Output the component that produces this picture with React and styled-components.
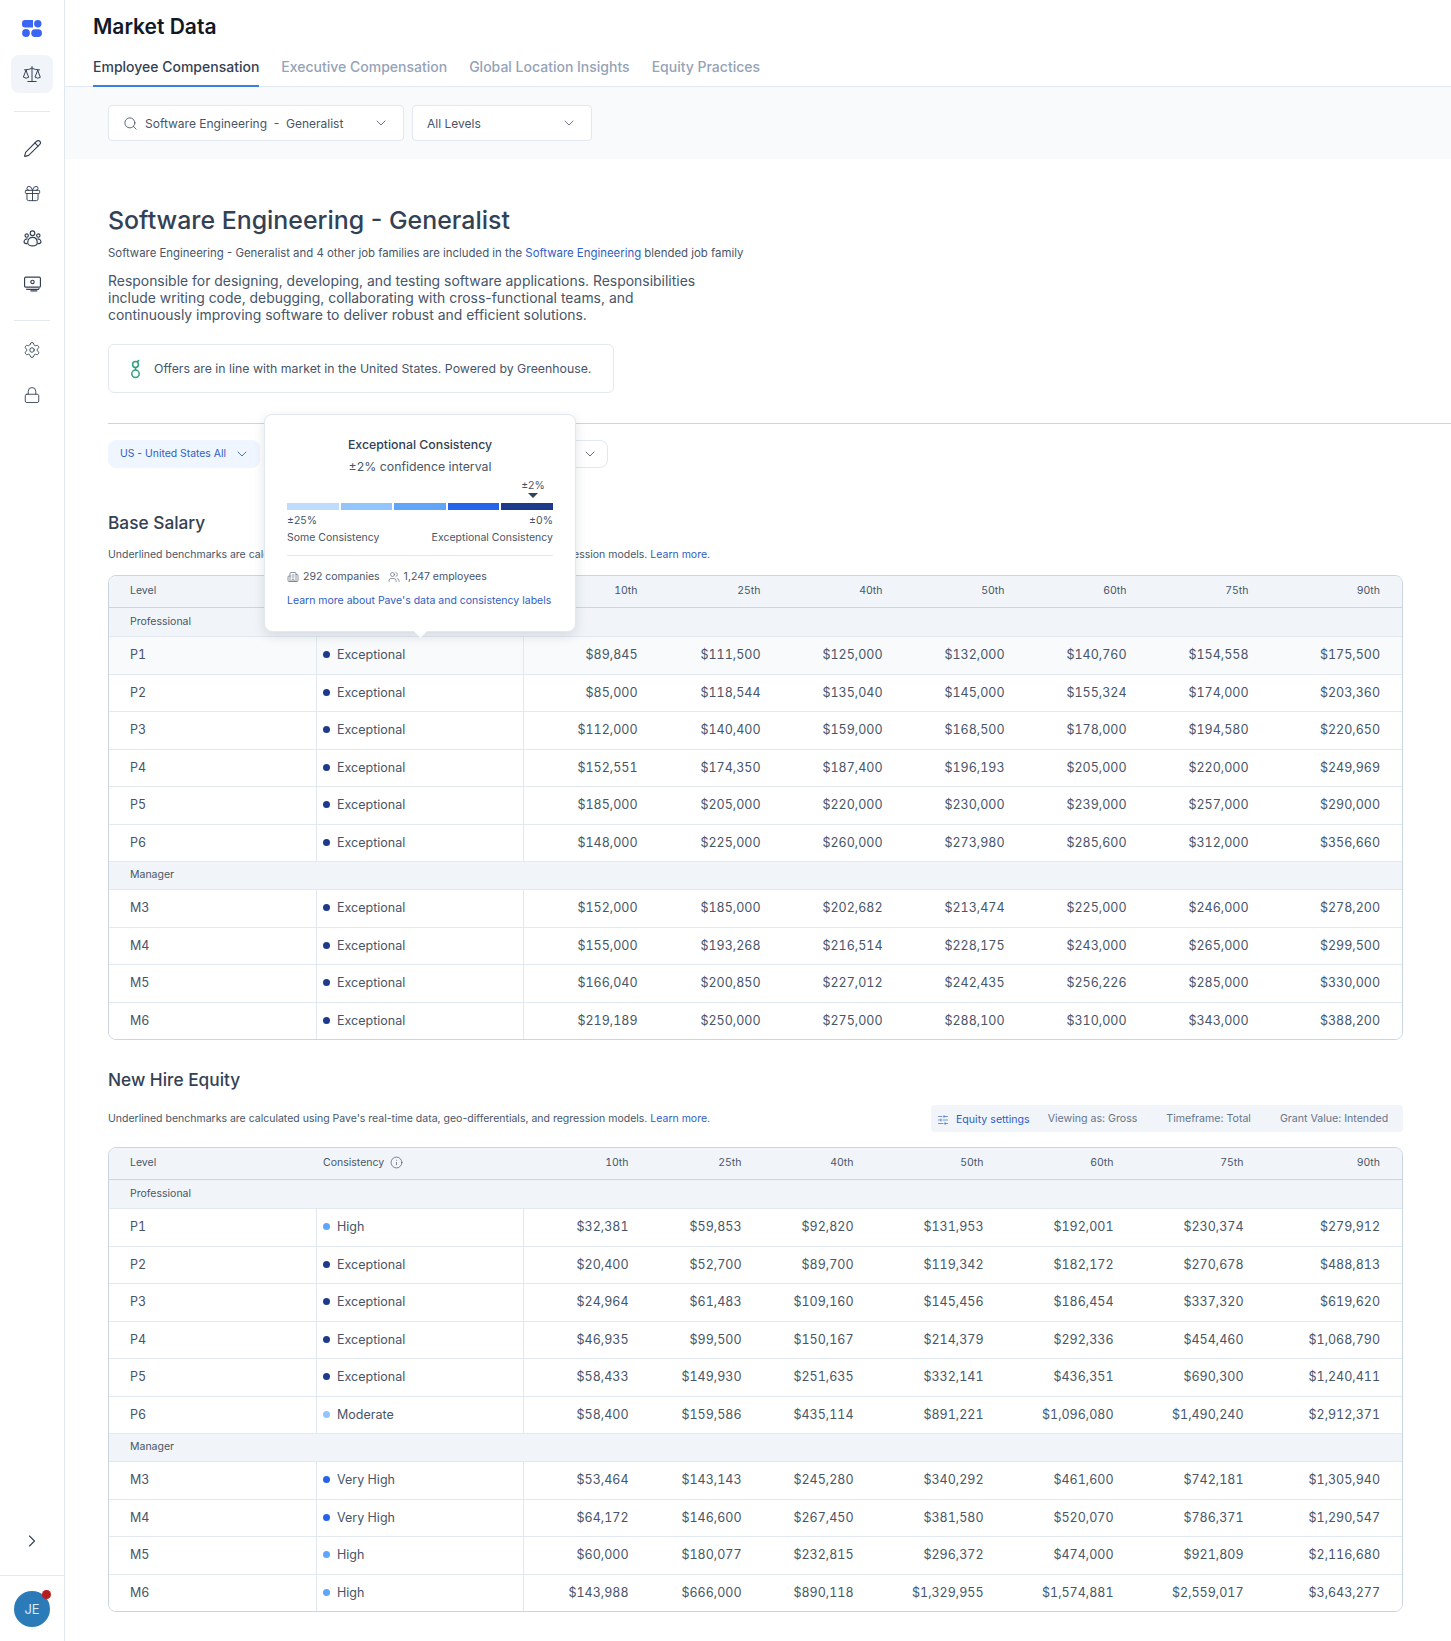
import React from "react";
import styled, { createGlobalStyle } from "styled-components";
import {
  Scale,
  Pencil,
  Gift,
  Settings,
  Lock,
  ChevronRight,
  ChevronDown,
  Search,
  Info,
  SlidersHorizontal,
  Building2,
  Users,
} from "lucide-react";

const GlobalStyle = createGlobalStyle`
  body {
    margin: 0;
    padding: 0;
    background: #fff;
    font-family: Inter, "Noto Sans", sans-serif;
    color: #334155;
  }
  * {
    box-sizing: border-box;
  }
`;

const Shell = styled.div`
  display: flex;
  min-height: 1641px;
`;

const Sidebar = styled.aside`
  width: 65px;
  flex-shrink: 0;
  display: flex;
  flex-direction: column;
  align-items: center;
  border-right: 1px solid #e2e8f0;
  color: #334155;
`;

const LogoSlot = styled.div`
  height: 55px;
  display: flex;
  align-items: center;
  justify-content: center;
  padding-top: 1px;
`;

const NavItem = styled.div`
  width: 42px;
  height: 38px;
  margin: ${(p) => p.$margin || "0"};
  display: flex;
  align-items: center;
  justify-content: center;
  border-radius: 8px;
  background: ${(p) => (p.$active ? "#f1f5f9" : "transparent")};
`;

const SideRule = styled.div`
  width: 36px;
  height: 1px;
  background: #e2e8f0;
  margin: ${(p) => p.$margin};
`;

const SideFoot = styled.div`
  margin-top: auto;
  width: 100%;
  display: flex;
  flex-direction: column;
  align-items: center;
`;

const FootRule = styled.div`
  width: 100%;
  height: 1px;
  background: #e2e8f0;
  margin-top: 24px;
`;

const Avatar = styled.div`
  position: relative;
  width: 36px;
  height: 36px;
  margin: 15px 0 14px;
  border-radius: 50%;
  background: #2b7bb9;
  color: #dbeafe;
  font-size: 13px;
  display: flex;
  align-items: center;
  justify-content: center;
`;

const Badge = styled.span`
  position: absolute;
  top: -1px;
  right: -1px;
  width: 9px;
  height: 9px;
  border-radius: 50%;
  background: #b91c1c;
`;

const Main = styled.main`
  flex: 1;
  min-width: 0;
`;

const TopBar = styled.header`
  padding: 14px 0 0 28px;
  border-bottom: 1px solid #e2e8f0;
`;

const PageTitle = styled.h1`
  margin: 0;
  font-size: 21px;
  line-height: 26px;
  font-weight: 600;
  color: #111827;
`;

const Tabs = styled.nav`
  display: flex;
  gap: 22px;
  margin-top: 17px;
`;

const Tab = styled.div`
  font-size: 14px;
  line-height: 20px;
  font-weight: 500;
  padding-bottom: 8px;
  color: ${(p) => (p.$active ? "#334155" : "#94a3b8")};
  border-bottom: 2px solid ${(p) => (p.$active ? "#3b7de0" : "transparent")};
  margin-bottom: -1px;
`;

const FilterBar = styled.div`
  display: flex;
  gap: 8px;
  padding: 18px 0 18px 43px;
  background: #f8fafc;
`;

const Select = styled.div`
  width: ${(p) => p.$width}px;
  height: 36px;
  padding: 0 14px;
  display: flex;
  align-items: center;
  gap: 7px;
  background: #fff;
  border: 1px solid #e2e8f0;
  border-radius: 4px;
  font-size: 12px;
  color: #475569;

  span {
    flex: 1;
    white-space: pre;
  }
`;

const Content = styled.div`
  padding: 43px 48px 0 43px;
`;

const JobTitle = styled.h2`
  margin: 0;
  font-size: 24.9px;
  line-height: 36px;
  font-weight: 500;
  color: #334155;
`;

const Blended = styled.p`
  margin: 6px 0 0;
  font-size: 11.4px;
  line-height: 18px;
  color: #475569;
`;

const TextLink = styled.a`
  color: #2f5dc4;
`;

const Description = styled.p`
  margin: 10px 0 0;
  width: 600px;
  font-size: 13.95px;
  line-height: 17px;
  color: #475569;
`;

const Callout = styled.div`
  width: 506px;
  height: 49px;
  margin-top: 21px;
  padding: 0 21px;
  display: flex;
  align-items: center;
  gap: 12px;
  border: 1px solid #e2e8f0;
  border-radius: 6px;
  font-size: 12.3px;
  color: #475569;
  white-space: nowrap;
`;

const Benchmarks = styled.div`
  position: relative;
  margin: 30px -48px 0 0;
  border-top: 1px solid #cbd5e1;
  padding: 16px 48px 0 0;
`;

const ChipRow = styled.div`
  display: flex;
  gap: 8px;
`;

const Chip = styled.div`
  height: 28px;
  width: ${(p) => p.$width}px;
  padding: 0 9px 1px 11px;
  display: flex;
  align-items: center;
  justify-content: space-between;
  border-radius: 8px;
  font-size: 10.4px;
  color: #2f5dc4;
  white-space: nowrap;
  background: ${(p) => (p.$plain ? "#fff" : "#eff6ff")};
  border: 1px solid ${(p) => (p.$plain ? "#e2e8f0" : "#eff6ff")};
`;

const SectionTitle = styled.h3`
  margin: ${(p) => p.$margin};
  font-size: 17.3px;
  line-height: 24px;
  font-weight: 500;
  color: #334155;
`;

const Note = styled.p`
  margin: 0;
  font-size: 10.5px;
  line-height: 16px;
  color: #475569;
`;

const NoteRow = styled.div`
  display: flex;
  align-items: center;
  justify-content: space-between;
  margin-top: ${(p) => p.$top}px;
`;

const EquityBar = styled.div`
  width: 472px;
  height: 27px;
  padding: 0 14px 0 6px;
  display: flex;
  align-items: center;
  background: #f1f5f9;
  border-radius: 4px;
  font-size: 10.6px;
  color: #64748b;
  white-space: nowrap;
`;

const EquityLink = styled.span`
  display: flex;
  align-items: center;
  gap: 7px;
  color: #2f5dc4;
  padding-top: 2px;
  margin-right: 18px;
`;

const EquityItem = styled.span`
  margin-right: ${(p) => p.$gap || 0}px;
`;

const Table = styled.div`
  margin-top: ${(p) => p.$top}px;
  border: 1px solid #cbd5e1;
  border-radius: 8px;
  overflow: hidden;
`;

const Row = styled.div`
  display: grid;
  grid-template-columns: ${(p) => p.$cols};
  height: 37.5px;
  align-items: stretch;
  font-size: 12.5px;
  font-variant-numeric: tabular-nums;
  color: #475569;
  background: ${(p) => (p.$hover ? "#f8fafc" : "#fff")};
  border-top: 1px solid #e2e8f0;
`;

const HeadRow = styled(Row)`
  height: 32px;
  padding-bottom: 1px;
  font-size: 10.5px;
  background: #f1f5f9;
  border-top: 0;
  border-bottom: 1px solid #cbd5e1;
`;

const GroupRow = styled.div`
  height: 28px;
  padding: 0 0 2px 21px;
  display: flex;
  align-items: center;
  background: #f1f5f9;
  font-size: 10.5px;
  color: #475569;
  border-top: ${(p) => (p.$first ? "0" : "1px solid #e2e8f0")};
`;

const Cell = styled.div`
  display: flex;
  align-items: center;
  gap: ${(p) => p.$gap || 6}px;
  justify-content: ${(p) => (p.$right ? "flex-end" : "flex-start")};
  padding: 0 ${(p) => (p.$last ? 22 : 0)}px 1px ${(p) => p.$left || 0}px;
  border-left: ${(p) => (p.$split ? "1px solid #e2e8f0" : "0")};
  white-space: nowrap;
`;

const Dot = styled.i`
  width: 7px;
  height: 7px;
  border-radius: 50%;
  background: ${(p) => p.$color};
`;

const Popover = styled.div`
  position: absolute;
  z-index: 5;
  top: -10px;
  left: 156px;
  width: 312px;
  height: 218px;
  padding: 20px 22px 0;
  background: #fff;
  border: 1px solid #e2e8f0;
  border-radius: 8px;
  box-shadow: 0 4px 12px rgba(15, 23, 42, 0.12);
  color: #475569;
  font-size: 10.5px;

  &:after {
    content: "";
    position: absolute;
    left: 151px;
    bottom: -5px;
    width: 9px;
    height: 9px;
    background: #fff;
    transform: rotate(45deg);
  }
`;

const PopTitle = styled.div`
  text-align: center;
  font-size: 12.3px;
  line-height: 20px;
  font-weight: 500;
  color: #334155;
`;

const PopSub = styled(PopTitle)`
  margin-top: 2px;
  font-weight: 400;
  color: #475569;
`;

const Marker = styled.div`
  margin-top: 2px;
  width: 40px;
  margin-left: auto;
  text-align: center;
  line-height: 14px;
`;

const MarkerArrow = styled.div`
  margin: 0 auto;
  width: 0;
  height: 0;
  border-left: 5px solid transparent;
  border-right: 5px solid transparent;
  border-top: 5px solid #334155;
`;

const Bar = styled.div`
  display: grid;
  grid-template-columns: repeat(5, 1fr);
  gap: 2px;
  margin-top: 5px;
`;

const BarPiece = styled.div`
  height: 7px;
  background: ${(p) => p.$color};
`;

const Between = styled.div`
  display: flex;
  justify-content: space-between;
  line-height: 17px;
  margin-top: ${(p) => p.$top || 0}px;
`;

const PopRule = styled.div`
  height: 1px;
  background: #e2e8f0;
  margin-top: 9px;
`;

const Stats = styled.div`
  display: flex;
  align-items: center;
  gap: 4px;
  margin-top: 13px;
  line-height: 16px;

  span + svg {
    margin-left: 4px;
  }
`;

const PopLink = styled(TextLink)`
  display: block;
  margin-top: 8px;
  line-height: 16px;
`;

const LogoMark = () => (
  <svg width="20" height="17" viewBox="0 0 20 17" fill="#3b66f5">
    <path d="M0 3a3 3 0 0 1 3-3h8v7.4H3a3 3 0 0 1-3-3z" />
    <circle cx="15.8" cy="3.7" r="3.7" />
    <circle cx="4" cy="13" r="3.9" />
    <rect x="9.2" y="9.2" width="10.8" height="7.8" rx="3.9" />
  </svg>
);

const GroupIcon = () => (
  <svg width="19" height="19" viewBox="0 0 18 18" fill="none" stroke="currentColor" strokeWidth="1.1">
    <circle cx="9" cy="4" r="2.2" />
    <circle cx="3.5" cy="6.2" r="1.6" />
    <circle cx="14.5" cy="6.2" r="1.6" />
    <path d="M4.5 13c0-3.6 2-5 4.5-5s4.5 1.4 4.5 5c0 1.8-2 3-4.5 3s-4.5-1.2-4.5-3z" />
    <path d="M4.4 9.4C2.4 9.3 1 10.4 1 12.2c0 1 1 1.6 3.2 1.7M13.6 9.4c2-.1 3.4 1 3.4 2.8 0 1-1 1.6-3.2 1.7" />
  </svg>
);

const MoneyIcon = () => (
  <svg width="19" height="19" viewBox="0 0 18 18" fill="none" stroke="currentColor" strokeWidth="1.1">
    <rect x="1.5" y="3" width="15" height="9.5" rx="1.2" />
    <circle cx="9" cy="7.5" r="1.6" />
    <path d="M4 7.5h.1M13.9 7.5h.1M3 14.5h11.5l1-1M7 16h6.5" />
  </svg>
);

const GreenhouseIcon = () => (
  <svg width="12" height="20" viewBox="0 0 12 20" fill="none" stroke="#2f9e7a" strokeWidth="1.5">
    <circle cx="5.5" cy="5.5" r="2.9" />
    <circle cx="5.5" cy="14.8" r="3.7" />
    <path d="M5.5 8.4v2.7M7.4 3.2c.2-1 .9-1.8 1.9-2" />
  </svg>
);

const LEVELS = { E: "Exceptional", V: "Very High", H: "High", M: "Moderate" };
const DOTS = { E: "#1e3a8a", V: "#2563eb", H: "#60a5fa", M: "#93c5fd" };

const BASE_COLS = "207px 206.5px 115px 123px 122px 122px 122px 122px 1fr";
const EQUITY_COLS = "207px 206.5px 106px 113px 112px 130px 130px 130px 1fr";
const PERCENTILES = ["10th", "25th", "40th", "50th", "60th", "75th", "90th"];

const baseRows = [
  ["P1", "E", "89,845 111,500 125,000 132,000 140,760 154,558 175,500"],
  ["P2", "E", "85,000 118,544 135,040 145,000 155,324 174,000 203,360"],
  ["P3", "E", "112,000 140,400 159,000 168,500 178,000 194,580 220,650"],
  ["P4", "E", "152,551 174,350 187,400 196,193 205,000 220,000 249,969"],
  ["P5", "E", "185,000 205,000 220,000 230,000 239,000 257,000 290,000"],
  ["P6", "E", "148,000 225,000 260,000 273,980 285,600 312,000 356,660"],
  ["M3", "E", "152,000 185,000 202,682 213,474 225,000 246,000 278,200"],
  ["M4", "E", "155,000 193,268 216,514 228,175 243,000 265,000 299,500"],
  ["M5", "E", "166,040 200,850 227,012 242,435 256,226 285,000 330,000"],
  ["M6", "E", "219,189 250,000 275,000 288,100 310,000 343,000 388,200"],
];

const equityRows = [
  ["P1", "H", "32,381 59,853 92,820 131,953 192,001 230,374 279,912"],
  ["P2", "E", "20,400 52,700 89,700 119,342 182,172 270,678 488,813"],
  ["P3", "E", "24,964 61,483 109,160 145,456 186,454 337,320 619,620"],
  ["P4", "E", "46,935 99,500 150,167 214,379 292,336 454,460 1,068,790"],
  ["P5", "E", "58,433 149,930 251,635 332,141 436,351 690,300 1,240,411"],
  ["P6", "M", "58,400 159,586 435,114 891,221 1,096,080 1,490,240 2,912,371"],
  ["M3", "V", "53,464 143,143 245,280 340,292 461,600 742,181 1,305,940"],
  ["M4", "V", "64,172 146,600 267,450 381,580 520,070 786,371 1,290,547"],
  ["M5", "H", "60,000 180,077 232,815 296,372 474,000 921,809 2,116,680"],
  ["M6", "H", "143,988 666,000 890,118 1,329,955 1,574,881 2,559,017 3,643,277"],
];

function DataRow({ row, cols, hover }) {
  const [level, tier, values] = row;
  return (
    <Row $cols={cols} $hover={hover}>
      <Cell $left={21}>{level}</Cell>
      <Cell $left={6} $gap={7} $split>
        <Dot $color={DOTS[tier]} />
        {LEVELS[tier]}
      </Cell>
      {values.split(" ").map((v, i) => (
        <Cell key={i} $right $split={i === 0} $last={i === 6}>
          ${v}
        </Cell>
      ))}
    </Row>
  );
}

function DataTable({ rows, cols, top, hoverFirst }) {
  return (
    <Table $top={top}>
      <HeadRow $cols={cols}>
        <Cell $left={21}>Level</Cell>
        <Cell $left={7}>
          Consistency <Info size={13} strokeWidth={1.3} />
        </Cell>
        {PERCENTILES.map((p, i) => (
          <Cell key={p} $right $last={i === 6}>
            {p}
          </Cell>
        ))}
      </HeadRow>
      <GroupRow $first>Professional</GroupRow>
      {rows.slice(0, 6).map((r, i) => (
        <DataRow key={r[0]} row={r} cols={cols} hover={hoverFirst && i === 0} />
      ))}
      <GroupRow>Manager</GroupRow>
      {rows.slice(6).map((r) => (
        <DataRow key={r[0]} row={r} cols={cols} />
      ))}
    </Table>
  );
}

function App() {
  return (
    <>
      <GlobalStyle />
      <Shell>
        <Sidebar>
          <LogoSlot>
            <LogoMark />
          </LogoSlot>
          <NavItem $active>
            <Scale size={20} strokeWidth={1.2} />
          </NavItem>
          <SideRule $margin="18px 0 17px" />
          <NavItem>
            <Pencil size={19} strokeWidth={1.4} />
          </NavItem>
          <NavItem $margin="7px 0 0">
            <Gift size={19} strokeWidth={1.2} />
          </NavItem>
          <NavItem $margin="7px 0 0">
            <GroupIcon />
          </NavItem>
          <NavItem $margin="7px 0 0">
            <MoneyIcon />
          </NavItem>
          <SideRule $margin="18px 0 10px" />
          <NavItem>
            <Settings size={18} strokeWidth={1.2} />
          </NavItem>
          <NavItem $margin="7px 0 0">
            <Lock size={18} strokeWidth={1.2} />
          </NavItem>
          <SideFoot>
            <ChevronRight size={20} strokeWidth={1.3} />
            <FootRule />
            <Avatar>
              JE
              <Badge />
            </Avatar>
          </SideFoot>
        </Sidebar>
        <Main>
          <TopBar>
            <PageTitle>Market Data</PageTitle>
            <Tabs>
              <Tab $active>Employee Compensation</Tab>
              <Tab>Executive Compensation</Tab>
              <Tab>Global Location Insights</Tab>
              <Tab>Equity Practices</Tab>
            </Tabs>
          </TopBar>
          <FilterBar>
            <Select $width={296}>
              <Search size={15} strokeWidth={1.4} />
              <span>Software Engineering  -  Generalist</span>
              <ChevronDown size={16} strokeWidth={1.2} />
            </Select>
            <Select $width={180}>
              <span>All Levels</span>
              <ChevronDown size={16} strokeWidth={1.2} />
            </Select>
          </FilterBar>
          <Content>
            <JobTitle>Software Engineering - Generalist</JobTitle>
            <Blended>
              Software Engineering - Generalist and 4 other job families are included in the{" "}
              <TextLink>Software Engineering</TextLink> blended job family
            </Blended>
            <Description>
              Responsible for designing, developing, and testing software applications. Responsibilities
              include writing code, debugging, collaborating with cross-functional teams, and
              continuously improving software to deliver robust and efficient solutions.
            </Description>
            <Callout>
              <GreenhouseIcon />
              Offers are in line with market in the United States. Powered by Greenhouse.
            </Callout>

            <Benchmarks>
              <ChipRow>
                <Chip $width={152}>
                  US - United States All
                  <ChevronDown size={16} strokeWidth={1.3} />
                </Chip>
                <Chip $width={340} $plain>
                  <span />
                  <ChevronDown size={16} strokeWidth={1.3} color="#475569" />
                </Chip>
              </ChipRow>

              <Popover>
                <PopTitle>Exceptional Consistency</PopTitle>
                <PopSub>±2% confidence interval</PopSub>
                <Marker>
                  ±2%
                  <MarkerArrow />
                </Marker>
                <Bar>
                  <BarPiece $color="#bfdbfe" />
                  <BarPiece $color="#93c5fd" />
                  <BarPiece $color="#60a5fa" />
                  <BarPiece $color="#2563eb" />
                  <BarPiece $color="#1e3a8a" />
                </Bar>
                <Between $top={2}>
                  <span>±25%</span>
                  <span>±0%</span>
                </Between>
                <Between>
                  <span>Some Consistency</span>
                  <span>Exceptional Consistency</span>
                </Between>
                <PopRule />
                <Stats>
                  <Building2 size={12} strokeWidth={1.2} />
                  <span>292 companies</span>
                  <Users size={12} strokeWidth={1.2} />
                  <span>1,247 employees</span>
                </Stats>
                <PopLink>Learn more about Pave's data and consistency labels</PopLink>
              </Popover>

              <SectionTitle $margin="43px 0 0">Base Salary</SectionTitle>
              <NoteRow $top={12}>
                <Note>
                  Underlined benchmarks are calculated using Pave's real-time data, geo-differentials, and regression
                  models. <TextLink>Learn more.</TextLink>
                </Note>
              </NoteRow>
              <DataTable rows={baseRows} cols={BASE_COLS} top={12} hoverFirst />

              <SectionTitle $margin="28px 0 0">New Hire Equity</SectionTitle>
              <NoteRow $top={13}>
                <Note>
                  Underlined benchmarks are calculated using Pave's real-time data, geo-differentials, and regression
                  models. <TextLink>Learn more.</TextLink>
                </Note>
                <EquityBar>
                  <EquityLink>
                    <SlidersHorizontal size={12} strokeWidth={1.3} />
                    Equity settings
                  </EquityLink>
                  <EquityItem $gap={29}>Viewing as: Gross</EquityItem>
                  <EquityItem $gap={29}>Timeframe: Total</EquityItem>
                  <EquityItem>Grant Value: Intended</EquityItem>
                </EquityBar>
              </NoteRow>
              <DataTable rows={equityRows} cols={EQUITY_COLS} top={15} />
            </Benchmarks>
          </Content>
        </Main>
      </Shell>
    </>
  );
}

export default App;
